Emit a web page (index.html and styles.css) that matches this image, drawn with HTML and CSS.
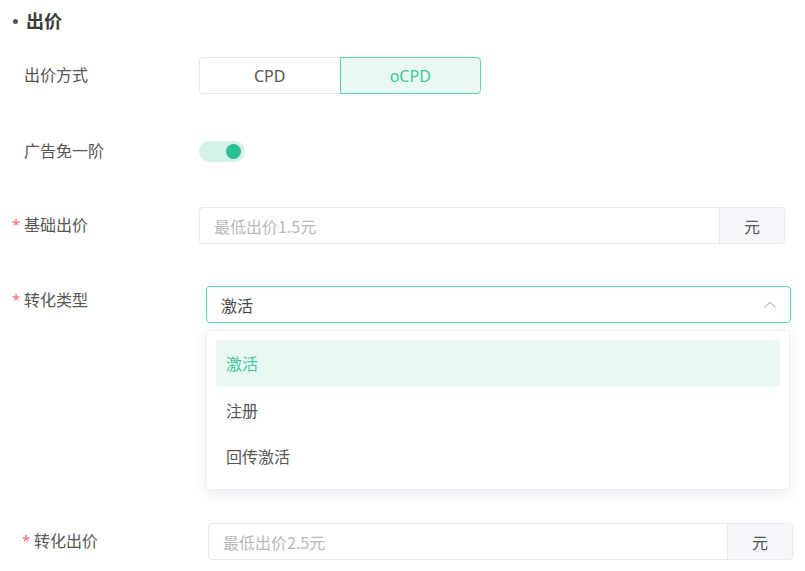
FILE: index.html
```html
<!DOCTYPE html>
<html lang="zh-CN">
<head>
<meta charset="utf-8">
<title>出价</title>
<link rel="stylesheet" href="styles.css">
</head>
<body>
<div class="page">
  <div class="title"><span class="bullet"></span><span>出价</span></div>
  <div class="form">
    <div class="row row-1">
      <div class="label"><span class="star"></span>出价方式</div>
      <div class="radio-group">
        <div class="radio">CPD</div>
        <div class="radio radio-active">oCPD</div>
      </div>
    </div>
    <div class="row row-2">
      <div class="label"><span class="star"></span>广告免一阶</div>
      <div class="switch"><span class="knob"></span></div>
    </div>
    <div class="row row-3">
      <div class="label"><span class="star">*</span>基础出价</div>
      <div class="group group-3">
        <div class="group-input placeholder">最低出价1.5元</div>
        <div class="addon">元</div>
      </div>
    </div>
    <div class="row row-4">
      <div class="label label-top"><span class="star">*</span>转化类型</div>
      <div class="select-wrap">
        <div class="select">
          <span class="select-value">激活</span>
          <svg class="chevron" width="14" height="8" viewBox="0 0 14 8"><polyline points="1,7 7,1.5 13,7" fill="none" stroke="#c0c4cc" stroke-width="1.4"/></svg>
        </div>
        <div class="dropdown">
          <div class="option option-active">激活</div>
          <div class="option">注册</div>
          <div class="option">回传激活</div>
        </div>
      </div>
    </div>
    <div class="row row-5">
      <div class="label"><span class="star">*</span>转化出价</div>
      <div class="group group-5">
        <div class="group-input placeholder">最低出价2.5元</div>
        <div class="addon">元</div>
      </div>
    </div>
  </div>
</div>
</body>
</html>
```
FILE: styles.css
```css
* { box-sizing: border-box; }
html, body {
  margin: 0;
  padding: 0;
  background: #ffffff;
}
body {
  font-family: "Noto Sans CJK SC", "Noto Sans", sans-serif;
  color: #555555;
  width: 805px;
  height: 571px;
  overflow: hidden;
}
.page {
  padding: 8px 0 0 12px;
}
.title {
  display: flex;
  align-items: center;
  height: 24px;
  padding-left: 1px;
  gap: 8px;
  font-size: 18px;
  font-weight: 700;
  color: #3a3a3a;
}
.bullet {
  width: 5px;
  height: 5px;
  border-radius: 50%;
  background: #555555;
  margin-top: 2px;
}
.form {
  margin-top: 25px;
}
.row {
  display: flex;
  align-items: center;
}
.row-2 { margin-top: 39px; height: 37px; }
.row-3 { margin-top: 37px; }
.row-4 { margin-top: 42px; align-items: flex-start; }
.row-5 { margin-top: 200px; padding-left: 10px; }
.label {
  flex: none;
  width: 187px;
  display: flex;
  align-items: center;
  font-size: 16px;
  line-height: 22px;
  margin-bottom: 3px;
  color: #555555;
}
.label-top {
  line-height: 26px;
  margin-bottom: 0;
}
.star {
  flex: none;
  width: 12px;
  color: #f56c6c;
  font-size: 15px;
  font-family: "Noto Sans", sans-serif;
}
.radio-group {
  display: flex;
  width: 282px;
  height: 37px;
}
.radio {
  flex: 1;
  display: flex;
  align-items: center;
  justify-content: center;
  border: 1px solid #e6e8eb;
  font-family: "Noto Sans", "Noto Sans CJK SC", sans-serif;
  font-size: 16px;
  color: #555555;
}
.radio:first-child {
  border-radius: 4px 0 0 4px;
  border-right: none;
}
.radio-active {
  border: 1.5px solid #5dd2af;
  border-radius: 0 4px 4px 0;
  background: #eaf8f4;
  color: #3fc59d;
}
.switch {
  width: 46px;
  height: 21px;
  border-radius: 11px;
  background: #d3f1e7;
  display: flex;
  align-items: center;
  justify-content: flex-end;
  padding-right: 4px;
}
.knob {
  width: 15px;
  height: 15px;
  border-radius: 50%;
  background: #2bbf92;
}
.group {
  display: flex;
  height: 37px;
  border: 1px solid #e6e8eb;
  border-radius: 4px;
  overflow: hidden;
}
.group-3 { width: 586px; }
.group-5 { width: 585px; margin-left: -1px; }
.group-input {
  flex: 1;
  display: flex;
  align-items: center;
  padding-left: 14px;
  font-size: 16px;
}
.placeholder {
  color: #b8b8b8;
}
.addon {
  flex: none;
  width: 65px;
  display: flex;
  align-items: center;
  justify-content: center;
  border-left: 1px solid #e6e8eb;
  background: #f5f7fa;
  font-size: 16px;
  color: #555555;
}
.select-wrap {
  position: relative;
  margin-left: 7px;
  width: 585px;
}
.select {
  height: 37px;
  border: 1.5px solid #5fd4b1;
  border-radius: 4px;
  display: flex;
  align-items: center;
  justify-content: space-between;
  padding: 0 13px 0 14px;
  font-size: 16px;
  color: #444444;
}
.chevron {
  display: block;
}
.dropdown {
  position: absolute;
  top: 44px;
  left: 0;
  width: 584px;
  height: 160px;
  padding: 9px;
  background: #ffffff;
  border: 1px solid #edf0f4;
  border-radius: 4px;
  box-shadow: 0 4px 14px rgba(40, 60, 100, 0.09);
}
.option {
  height: 46.5px;
  display: flex;
  align-items: center;
  padding-left: 10px;
  margin-bottom: 0;
  font-size: 16px;
  color: #555555;
  border-radius: 4px;
}
.option-active {
  background: #eaf8f4;
  color: #3fc59d;
}
```
